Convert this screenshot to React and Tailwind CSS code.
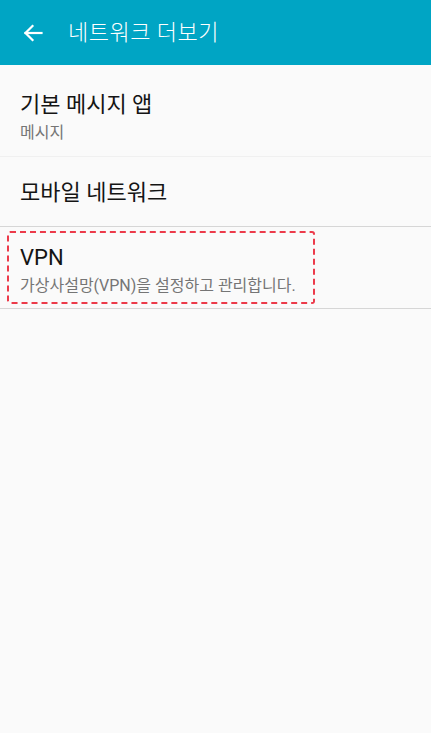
import { useState } from "react";

const kr = { fontFamily: '"Roboto", "Noto Sans CJK KR", sans-serif' };

const Row = ({ title, sub, className = "", children }) => (
    <div className={`relative flex flex-col px-5 ${className}`}>
        <span className="text-[22px] leading-[28px] text-[#141414]">{title}</span>
        {sub && <span className="mt-[4px] text-[16px] leading-[20px] text-[#757575]">{sub}</span>}
        {children}
    </div>
)

const App = () => {
    const [page] = useState("more");

    return (
        <div className="h-[733px] w-full bg-[#fafafa]" style={kr}>
            {/* header */}
            <div className="flex h-[65px] items-center bg-[#00a5c4] text-white">
                <svg className="ml-[23px] h-[20px] w-[20px]" viewBox="0 0 20 20" fill="none" stroke="white" strokeWidth="2.2" strokeLinecap="square">
                    <path d="M2.5 10H18.5" />
                    <path d="M9.5 3L2.5 10L9.5 17" />
                </svg>
                <span className="ml-[25px] text-[22px] font-light tracking-[0.5px]">네트워크 더보기</span>
            </div>

            {page === "more" && (
                <div>
                    <Row title="기본 메시지 앱" sub="메시지" className="h-[92px] border-b border-[#f0f0f0] pt-[26px]" />
                    <Row title="모바일 네트워크" className="h-[70px] justify-center border-b border-[#d6d6d6] pt-[2px]" />
                    <Row title="VPN" sub="가상사설망(VPN)을 설정하고 관리합니다." className="h-[82px] border-b border-[#d6d6d6] pt-[17px]">
                        <div className="pointer-events-none absolute left-[7px] top-[4px] h-[73px] w-[308px] rounded-[3px] border-2 border-dashed border-[#ec3a4a]" />
                    </Row>
                </div>
            )}
        </div>
    )
}
export default App
